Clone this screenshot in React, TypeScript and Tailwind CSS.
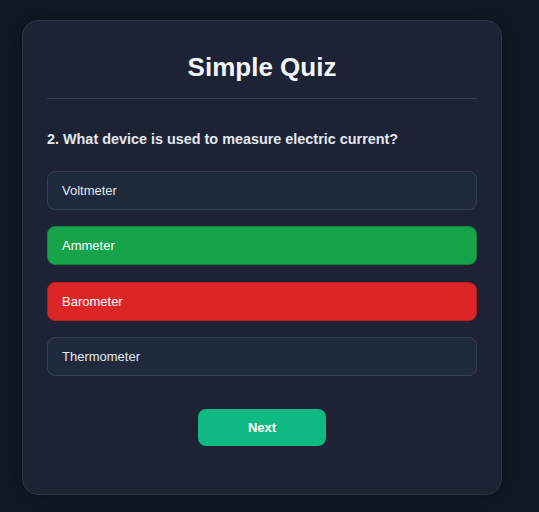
import { useState } from "react";

const options = ["Voltmeter", "Ammeter", "Barometer", "Thermometer"];

const App = () => {
  const [picked] = useState(2);
  const correct = 1;

  const optionClass = (i: number) => {
    if (i === correct) return "bg-[#16a34a] border-[#15803d] text-white";
    if (i === picked) return "bg-[#dc2626] border-[#b91c1c] text-white";
    return "bg-[#1f2a3c] border-[#334155] text-[#e2e8f0]";
  };

  return (
    <div
      className="min-h-screen bg-[#111827] pt-5 pb-4"
      style={{ fontFamily: '"Liberation Sans", Arial, sans-serif' }}
    >
      <div className="ml-[22px] w-[480px] rounded-2xl border border-[#2e3547] bg-[#1e2235] px-6 pt-6 pb-12 shadow-[0_0_24px_rgba(0,0,0,0.35)]">
        <div className="border-b border-[#2f4350] pb-[9px]">
          <h1 className="text-center text-[26px] font-bold leading-[44px] text-[#f1f5f9]">Simple Quiz</h1>
        </div>

        <p className="mt-[30px] text-[14.4px] font-bold leading-5 text-[#e2e8f0]">
          2. What device is used to measure electric current?
        </p>

        <div className="mt-[22px] flex flex-col gap-[16.4px]">
          {options.map((o, i) => (
            <button
              key={o}
              className={`h-[39px] rounded-lg border px-[14px] text-left text-[13px] font-medium ${optionClass(i)}`}
            >
              {o}
            </button>
          ))}
        </div>

        <div className="mt-[33px] flex justify-center">
          <button className="h-[37px] w-32 rounded-lg bg-[#10b981] text-[13px] font-bold text-white">Next</button>
        </div>
      </div>
    </div>
  );
};

export default App;
